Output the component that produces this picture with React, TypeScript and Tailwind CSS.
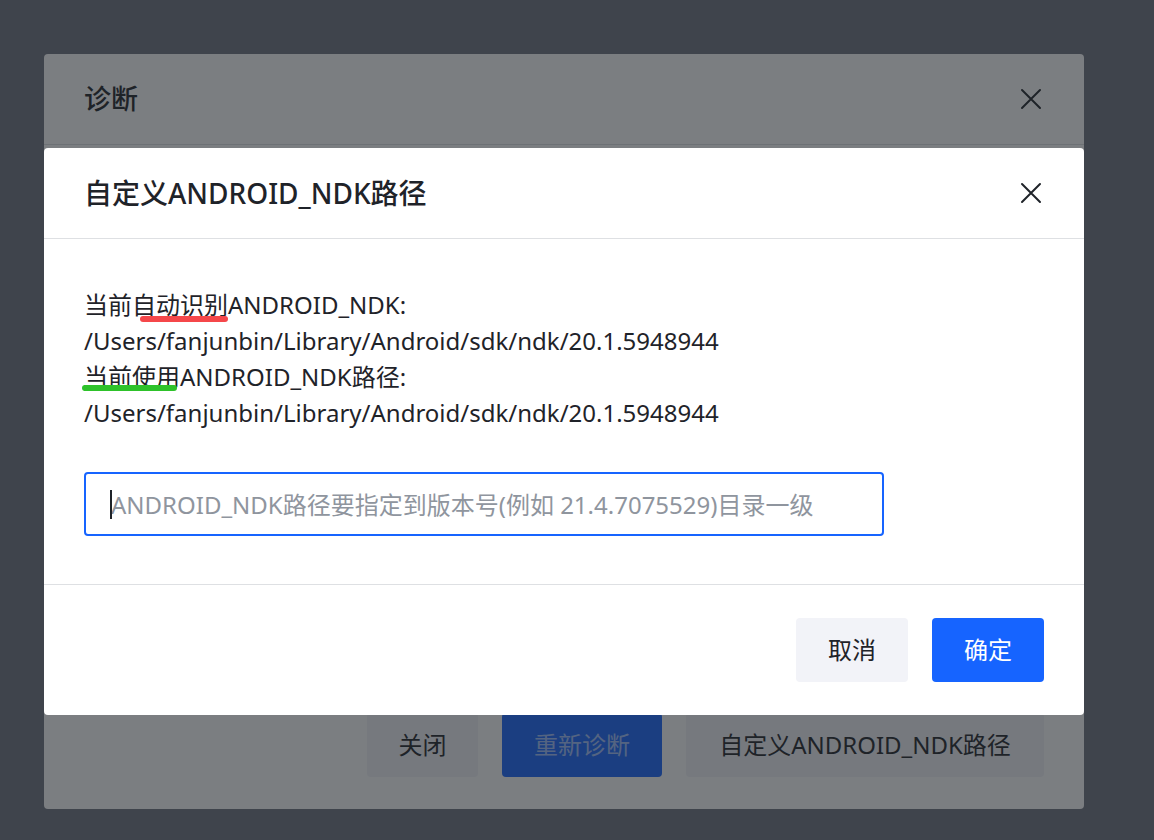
import React from "react";

const font = "font-['Noto_Sans','Noto_Sans_CJK_SC',sans-serif]";

const CloseIcon = () => (
  <svg width="22" height="22" viewBox="0 0 22 22" fill="none" stroke="#1f2329" strokeWidth="2" strokeLinecap="round">
    <path d="M2 2 L20 20 M20 2 L2 20" />
  </svg>
);

// hand-drawn highlight under a phrase
const Mark = ({ text, className }: { text: string; className: string }) => (
  <span className="relative inline-block">
    {text}
    <span className={`absolute h-[6px] rounded-full ${className}`} />
  </span>
);

export default function App() {
  return (
    <div className={`relative h-[840px] w-full overflow-hidden bg-[#6f737e] text-[#1f2329] ${font}`}>
      {/* diagnosis dialog underneath */}
      <div className="px-[44px] pt-[54px]">
        <div className="flex h-[755px] w-[1040px] flex-col rounded-[4px] bg-white">
          <div className="flex h-[91px] items-center justify-between border-b border-[#dee0e3] pl-[40px] pr-[42px]">
            <span className="text-[27px] font-medium">诊断</span>
            <CloseIcon />
          </div>
          <div className="flex-1" />
          <div className="flex justify-end gap-6 pb-[32px] pr-[40px] text-[24px]">
            <button className="h-16 w-[111px] rounded-[4px] bg-[#f2f3f8]">关闭</button>
            <button className="h-16 w-[160px] rounded-[4px] bg-[#1664ff] text-white/60">重新诊断</button>
            <button className="h-16 w-[358px] rounded-[4px] bg-[#f2f3f8]">自定义ANDROID_NDK路径</button>
          </div>
        </div>
      </div>

      {/* mask + custom path dialog */}
      <div className="absolute inset-0 bg-[#1f2329]/[0.59] pl-[44px] pt-[148px]">
        <div className="w-[1040px] rounded-[4px] bg-white">
          <div className="flex h-[91px] items-center justify-between border-b border-[#dee0e3] pl-[40px] pr-[42px]">
            <span className="text-[28px] font-medium">自定义ANDROID_NDK路径</span>
            <CloseIcon />
          </div>
          <div className="px-[40px] pb-[48px] pt-[48px] text-[24px] leading-[36px]">
            <div>
              当前
              <Mark text="自动识别" className="left-[8px] right-0 top-[29px] bg-[#f5474a]" />
              ANDROID_NDK:
            </div>
            <div>/Users/fanjunbin/Library/Android/sdk/ndk/20.1.5948944</div>
            <div>
              <Mark text="当前使用" className="-left-[2px] right-[3px] top-[26px] bg-[#2ec22a]" />
              ANDROID_NDK路径:
            </div>
            <div>/Users/fanjunbin/Library/Android/sdk/ndk/20.1.5948944</div>
            <div className="relative mt-[41px] w-[800px]">
              <input
                className="h-16 w-full rounded-[4px] border-2 border-[#1664ff] pl-[25px] text-[24px] outline-none placeholder:text-[#8f959e]"
                placeholder="ANDROID_NDK路径要指定到版本号(例如 21.4.7075529)目录一级"
              />
              <span className="absolute left-[26px] top-[18px] h-[29px] w-[2px] bg-[#1f2329]" />
            </div>
          </div>
          <div className="flex justify-end gap-6 border-t border-[#dee0e3] px-[40px] py-[33px] text-[24px]">
            <button className="h-16 w-[112px] rounded-[4px] bg-[#f2f3f8]">取消</button>
            <button className="h-16 w-[112px] rounded-[4px] bg-[#1664ff] text-white">确定</button>
          </div>
        </div>
      </div>
    </div>
  );
}
